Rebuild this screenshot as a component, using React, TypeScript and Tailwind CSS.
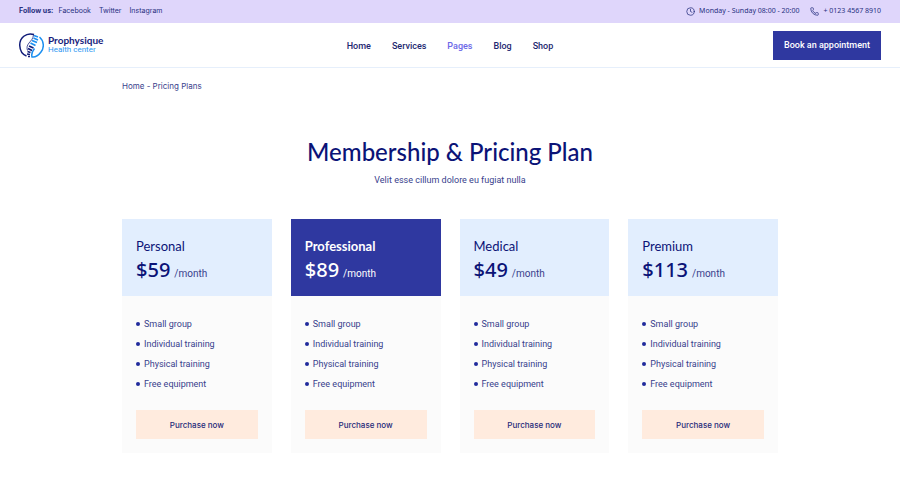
import React from "react";
import { Clock, Phone } from "lucide-react";

const FEATURES = ["Small group", "Individual training", "Physical training", "Free equipment"];

const PLANS = [
  { name: "Personal", price: "$59", featured: false },
  { name: "Professional", price: "$89", featured: true },
  { name: "Medical", price: "$49", featured: false },
  { name: "Premium", price: "$113", featured: false },
];

const NAV = ["Home", "Services", "Pages", "Blog", "Shop"];
const SOCIAL = ["Facebook", "Twitter", "Instagram"];

function SpineLogo() {
  return (
    <svg viewBox="0 0 50 50" className="size-[25px] shrink-0" fill="none" aria-hidden="true">
      <path d="M30 3 C14 -2 1 10 1.500 25 C2 36 7 43 15 46" stroke="#101b78" strokeWidth="3" />
      <path d="M41 8 C50 16 51 29 44 38 C38 46 32 49 26 48 C24 41 27 36 31 31" stroke="#1c8ff0" strokeWidth="3" />
      <path d="M29 4 C28 12 24 15 20 20 C16 25 15 29 17 35" stroke="#101b78" strokeWidth="1.500" />
      <g stroke="#1c8ff0" strokeWidth="3.200">
        <path d="M30 5 L38 8" />
        <path d="M29 10 L38 14" />
        <path d="M26 15 L36 19" />
        <path d="M23 20 L33 25" />
      </g>
      <g stroke="#101b78" strokeWidth="3.200">
        <path d="M20 26 L29 30" />
        <path d="M18 31 L26 35" />
        <path d="M17 37 L23 39" />
        <path d="M16 42 L22 43" />
        <path d="M18 47 L22 47" />
      </g>
    </svg>
  );
}

function TopBar() {
  return (
    <div className="flex h-[23px] items-center justify-between bg-[#dfd6fb] px-[19px] text-[7px] text-[#27307f]">
      <div className="flex items-center gap-2 font-['Inter',sans-serif]">
        <div className="flex items-center gap-[5px]">
          <span className="font-bold">Follow us:</span>
          <a href="#facebook">{SOCIAL[0]}</a>
        </div>
        {SOCIAL.slice(1).map((name) => (
          <a key={name} href={"#" + name.toLowerCase()}>{name}</a>
        ))}
      </div>
      <div className="flex items-center gap-[11px] font-['Noto_Sans',sans-serif]">
        <span className="flex items-center gap-1">
          <Clock className="size-[9px]" />
          Monday - Sunday 08:00 - 20:00
        </span>
        <a href="tel:+012345678910" className="flex items-center gap-1">
          <Phone className="size-[9px]" />
          + 0123 4567 8910
        </a>
      </div>
    </div>
  );
}

function Header() {
  return (
    <header className="grid h-[45px] grid-cols-[1fr_auto_1fr] items-center border-b border-[#e6effb] px-[19px]">
      <a href="#home" className="flex items-center gap-1">
        <SpineLogo />
        <span className="flex flex-col">
          <span className="font-['Lato',sans-serif] text-[10px] leading-[10px] font-bold text-[#161c7c]">Prophysique</span>
          <span className="text-[8px] leading-[10px] text-[#2d97f2]">Health center</span>
        </span>
      </a>
      <nav className="flex gap-[21px] pt-[3px] text-[9px] font-medium">
        {NAV.map((item) => (
          <a key={item} href={"#" + item.toLowerCase()} className={item === "Pages" ? "text-[#6c68e8]" : "text-[#1d2770]"}>
            {item}
          </a>
        ))}
      </nav>
      <button type="button" className="h-[29px] justify-self-end bg-[#2f38a0] px-[11px] pt-[2px] text-[9px] font-medium text-white">
        Book an appointment
      </button>
    </header>
  );
}

type Plan = (typeof PLANS)[number];

function PlanCard({ plan }: { plan: Plan }) {
  return (
    <article className="bg-[#fbfbfb]">
      <div className={"h-[77px] px-[14px] pt-[18px] " + (plan.featured ? "bg-[#2f38a0] text-white" : "bg-[#e2eefe] text-[#0b1377]")}>
        <h2 className={"font-['Lato',sans-serif] text-[13px] leading-[18px] " + (plan.featured ? "font-bold" : "")}>{plan.name}</h2>
        <p className="flex items-baseline gap-1 leading-[30px]">
          <span className="font-['Noto_Sans',sans-serif] text-[20px] font-medium">{plan.price}</span>
          <span className={"text-[10px] " + (plan.featured ? "text-white" : "text-[#38418c]")}>/month</span>
        </p>
      </div>
      <div className="px-[14px] pt-[18px] pb-[14px]">
        <ul className="text-[9px] leading-5 text-[#38418c]">
          {FEATURES.map((feature) => (
            <li key={feature} className="flex items-center gap-1">
              <span className="size-1 rounded-full bg-[#202b9c]" />
              {feature}
            </li>
          ))}
        </ul>
        <button type="button" className="mt-4 h-[29px] w-full bg-[#ffebde] font-['Inter',sans-serif] text-[8px] font-medium text-[#262a7a]">
          Purchase now
        </button>
      </div>
    </article>
  );
}

export default function App() {
  return (
    <div className="min-h-screen bg-white font-['Roboto',sans-serif]">
      <TopBar />
      <Header />
      <main className="mx-auto max-w-[704px] px-6 pt-[11px] pb-11">
        <nav aria-label="Breadcrumb" className="font-['Inter',sans-serif] text-[8px] leading-[14px] text-[#38418c]">
          <a href="#home">Home</a> - <span>Pricing Plans</span>
        </nav>
        <div className="pt-[42px] text-center">
          <h1 className="font-['Lato',sans-serif] text-[24px] leading-[34px] font-medium text-[#0b1377]">Membership &amp; Pricing Plan</h1>
          <p className="mt-1 text-[9px] leading-[14px] text-[#38418c]">Velit esse cillum dolore eu fugiat nulla</p>
        </div>
        <section className="mt-8 grid grid-cols-4 gap-[19px]">
          {PLANS.map((plan) => (
            <PlanCard key={plan.name} plan={plan} />
          ))}
        </section>
      </main>
    </div>
  );
}
